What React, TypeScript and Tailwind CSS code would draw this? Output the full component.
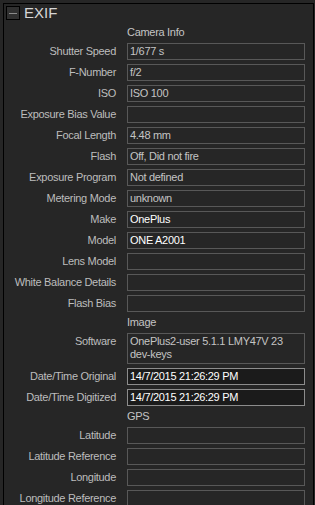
type Field = {
  label: string;
  value?: string;
  tall?: boolean;
  bright?: boolean;
  dark?: boolean;
};

type Section = {
  title: string;
  fields: Field[];
};

const sections: Section[] = [
  {
    title: "Camera Info",
    fields: [
      { label: "Shutter Speed", value: "1/677 s" },
      { label: "F-Number", value: "f/2" },
      { label: "ISO", value: "ISO 100" },
      { label: "Exposure Bias Value" },
      { label: "Focal Length", value: "4.48 mm" },
      { label: "Flash", value: "Off, Did not fire" },
      { label: "Exposure Program", value: "Not defined" },
      { label: "Metering Mode", value: "unknown" },
      { label: "Make", value: "OnePlus", bright: true },
      { label: "Model", value: "ONE A2001", bright: true },
      { label: "Lens Model" },
      { label: "White Balance Details" },
      { label: "Flash Bias" },
    ],
  },
  {
    title: "Image",
    fields: [
      { label: "Software", value: "OnePlus2-user 5.1.1 LMY47V 23 dev-keys", tall: true },
      { label: "Date/Time Original", value: "14/7/2015 21:26:29 PM", bright: true, dark: true },
      { label: "Date/Time Digitized", value: "14/7/2015 21:26:29 PM", bright: true, dark: true },
    ],
  },
  {
    title: "GPS",
    fields: [
      { label: "Latitude" },
      { label: "Latitude Reference" },
      { label: "Longitude" },
      { label: "Longitude Reference" },
    ],
  },
];

function Row({ field }: { field: Field }) {
  const boxClass = field.dark
    ? "border-[#8c8c8c] bg-[#1b1b1b]"
    : "border-[#585858] bg-[#262626]";
  const textClass = field.bright ? "text-white" : "text-[#c4c4c4]";
  return (
    <div className="flex items-start">
      <div className="flex h-[17px] w-[112px] items-center justify-end text-[#bdbdbd]">
        {field.label}
      </div>
      <div
        className={`ml-[11px] w-[178px] border px-[2px] ${boxClass} ${textClass} ${
          field.tall ? "h-[31px] pt-[1px] leading-[13px]" : "flex h-[17px] items-center"
        }`}
      >
        {field.value}
      </div>
    </div>
  );
}

export default function App() {
  return (
    <div
      className="h-[505px] w-[315px] overflow-hidden bg-[#262626] pl-[3px] pt-[3px] text-[11px] tracking-[-0.3px]"
      style={{ fontFamily: '"Liberation Sans", Arial, sans-serif' }}
    >
      <div className="h-[520px] w-[311px] border border-black bg-[#262626]">
        <div className="flex h-[18px] items-center">
          <div className="ml-[2px] flex h-[14px] w-[14px] items-center justify-center border border-black bg-[#303030]">
            <div className="h-px w-[8px] bg-[#8a8a8a]" />
          </div>
          <span className="ml-[4px] text-[15px] tracking-normal text-[#d6d6d6]">EXIF</span>
        </div>
        <div className="mt-[4px] flex flex-col gap-[4px]">
          {sections.map((s) => (
            <div key={s.title} className="flex flex-col gap-[4px]">
              <div className="ml-[123px] flex h-[13px] items-center text-[#c4c4c4]">{s.title}</div>
              {s.fields.map((f) => (
                <Row key={f.label} field={f} />
              ))}
            </div>
          ))}
        </div>
      </div>
    </div>
  );
}
